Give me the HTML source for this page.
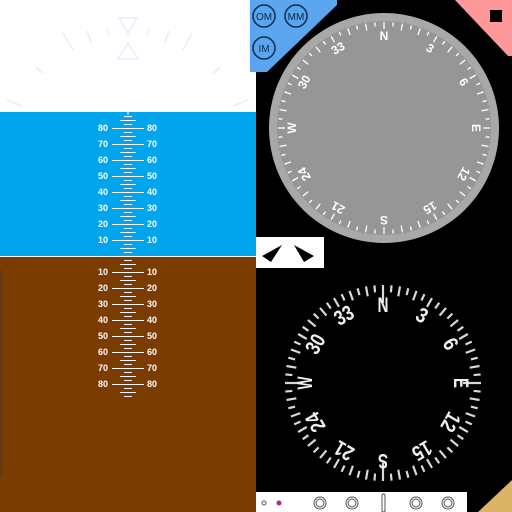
<!DOCTYPE html>
<html><head><meta charset="utf-8"><style>
html,body{margin:0;padding:0;width:512px;height:512px;overflow:hidden;background:#000}
svg{display:block}
text{font-family:"Liberation Sans",sans-serif;font-weight:bold}
</style></head><body>
<svg id="s" width="512" height="512" viewBox="0 0 512 512">
<rect x="0" y="0" width="512" height="512" fill="#000"/>
<rect x="0" y="0" width="256" height="112" fill="#fff"/>
<g stroke="#e4eefa" stroke-width="1.5" fill="none">
<path d="M119 18 L137 18 L128 33 Z"/><path d="M118 59 L138 59 L128 43 Z"/>
<line x1="63" y1="33" x2="73" y2="50"/><line x1="87" y1="31" x2="91" y2="42"/>
<line x1="107" y1="27" x2="109" y2="37"/><line x1="149" y1="27" x2="147" y2="37"/>
<line x1="169" y1="31" x2="165" y2="42"/><line x1="192" y1="33" x2="183" y2="50"/>
<line x1="36" y1="67" x2="43" y2="73"/><line x1="220" y1="67" x2="213" y2="73"/>
<line x1="7" y1="100" x2="22" y2="106"/><line x1="248" y1="100" x2="233" y2="106"/>
</g>
<rect x="0" y="112" width="256" height="144" fill="#00a5ec"/>
<rect x="0" y="256" width="256" height="1" fill="#fff"/>
<rect x="0" y="257" width="256" height="255" fill="#7a3c00"/>
<rect x="0" y="270" width="2" height="205" fill="#5a3a20"/>
<g id="ladder" stroke="#fff" stroke-width="1"></g>
<g fill="#fff" font-size="9">
<g text-anchor="end">
<text x="108" y="131">80</text><text x="108" y="147">70</text><text x="108" y="163">60</text><text x="108" y="179">50</text><text x="108" y="195">40</text><text x="108" y="211">30</text><text x="108" y="227">20</text><text x="108" y="243">10</text>
<text x="108" y="275">10</text><text x="108" y="291">20</text><text x="108" y="307">30</text><text x="108" y="323">40</text><text x="108" y="339">50</text><text x="108" y="355">60</text><text x="108" y="371">70</text><text x="108" y="387">80</text>
</g>
<g text-anchor="start">
<text x="147" y="131">80</text><text x="147" y="147">70</text><text x="147" y="163">60</text><text x="147" y="179">50</text><text x="147" y="195">40</text><text x="147" y="211">30</text><text x="147" y="227">20</text><text x="147" y="243">10</text>
<text x="147" y="275">10</text><text x="147" y="291">20</text><text x="147" y="307">30</text><text x="147" y="323">40</text><text x="147" y="339">50</text><text x="147" y="355">60</text><text x="147" y="371">70</text><text x="147" y="387">80</text>
</g></g>

<path d="M250 0 L337 0 L337 5 L267 72 L250 72 Z" fill="#5aa5ee"/>
<g fill="none" stroke="#0d2a4a" stroke-width="1.5"><circle cx="264" cy="16" r="11"/><circle cx="296" cy="16" r="11"/><circle cx="264" cy="48" r="11"/></g>
<g font-size="10" fill="#0d2a4a" text-anchor="middle"><text x="264" y="20" style="font-weight:normal">OM</text><text x="296" y="20" style="font-weight:normal">MM</text><text x="264" y="52" style="font-weight:normal">IM</text></g>
<path d="M455 0 L512 0 L512 56 L508 56 Z" fill="#f99"/>
<rect x="490" y="10" width="12" height="12" fill="#000"/>

<circle cx="384" cy="128" r="115" fill="#a8a8a8"/>
<circle cx="384" cy="128" r="107" fill="#969696"/>
<g id="g1" stroke="#fff" stroke-width="1.3"></g>
<g fill="#fff" font-size="12" text-anchor="middle">
<text x="384" y="40" transform="rotate(0 384 128)">N</text>
<text x="384" y="40" transform="rotate(30 384 128)">3</text>
<text x="384" y="40" transform="rotate(60 384 128)">6</text>
<text x="384" y="40" transform="rotate(90 384 128)">E</text>
<text x="384" y="40" transform="rotate(120 384 128)">12</text>
<text x="384" y="40" transform="rotate(150 384 128)">15</text>
<text x="384" y="40" transform="rotate(180 384 128)">S</text>
<text x="384" y="40" transform="rotate(210 384 128)">21</text>
<text x="384" y="40" transform="rotate(240 384 128)">24</text>
<text x="384" y="40" transform="rotate(270 384 128)">W</text>
<text x="384" y="40" transform="rotate(300 384 128)">30</text>
<text x="384" y="40" transform="rotate(330 384 128)">33</text>
</g>

<rect x="256" y="237" width="68" height="31" fill="#fff"/>
<path d="M262 256 L282 245 L271 262 Z" fill="#000"/>
<path d="M294 245 L314 256 L304 262 Z" fill="#000"/>

<g id="g2" stroke="#d8d8d8" stroke-width="2.2"></g>
<g fill="#f0f0f0" font-size="21" text-anchor="middle">
<text x="383" y="312" transform="rotate(0 383 383)" textLength="11" lengthAdjust="spacingAndGlyphs">N</text>
<text x="383" y="312" transform="rotate(30 383 383)" textLength="10" lengthAdjust="spacingAndGlyphs">3</text>
<text x="383" y="312" transform="rotate(60 383 383)" textLength="10" lengthAdjust="spacingAndGlyphs">6</text>
<text x="383" y="312" transform="rotate(90 383 383)" textLength="10" lengthAdjust="spacingAndGlyphs">E</text>
<text x="383" y="312" transform="rotate(120 383 383)" textLength="19" lengthAdjust="spacingAndGlyphs">12</text>
<text x="383" y="312" transform="rotate(150 383 383)" textLength="19" lengthAdjust="spacingAndGlyphs">15</text>
<text x="383" y="312" transform="rotate(180 383 383)" textLength="10" lengthAdjust="spacingAndGlyphs">S</text>
<text x="383" y="312" transform="rotate(210 383 383)" textLength="19" lengthAdjust="spacingAndGlyphs">21</text>
<text x="383" y="312" transform="rotate(240 383 383)" textLength="19" lengthAdjust="spacingAndGlyphs">24</text>
<text x="383" y="312" transform="rotate(270 383 383)" textLength="13" lengthAdjust="spacingAndGlyphs">W</text>
<text x="383" y="312" transform="rotate(300 383 383)" textLength="19" lengthAdjust="spacingAndGlyphs">30</text>
<text x="383" y="312" transform="rotate(330 383 383)" textLength="19" lengthAdjust="spacingAndGlyphs">33</text>
</g>

<rect x="256" y="492" width="211" height="20" fill="#fff"/>
<g fill="none" stroke="#555" stroke-width="1">
<circle cx="264" cy="503" r="2"/>
<circle cx="320" cy="503" r="6"/><circle cx="320" cy="503" r="4"/>
<circle cx="352" cy="503" r="6"/><circle cx="352" cy="503" r="4"/>
<circle cx="416" cy="503" r="6"/><circle cx="416" cy="503" r="4"/>
<circle cx="448" cy="503" r="6"/><circle cx="448" cy="503" r="4"/>
<rect x="382" y="494" width="3" height="18" rx="1.5"/>
</g>
<circle cx="279" cy="503" r="2.5" fill="#a03090"/>
<path d="M512 480 L512 512 L478 512 Z" fill="#dcb468"/>
</svg>
<script>
var NS="http://www.w3.org/2000/svg";
function ln(g,x1,y1,x2,y2){var l=document.createElementNS(NS,"line");l.setAttribute("x1",x1);l.setAttribute("y1",y1);l.setAttribute("x2",x2);l.setAttribute("y2",y2);g.appendChild(l);}
var L=document.getElementById("ladder");
ln(L,128,112,128,115);
[[116,4],[120,8],[124,4]].forEach(function(a){ln(L,128-a[1],a[0]+0.5,128+a[1],a[0]+0.5);});
function seg(y0){[[4,4],[8,8],[12,4]].forEach(function(a){ln(L,128-a[1],y0+a[0]+0.5,128+a[1],y0+a[0]+0.5);});}
for(var i=0;i<8;i++){var y=128+16*i;ln(L,112,y+0.5,144,y+0.5);seg(y);}
[260,264,268].forEach(function(y,k){var h=k==1?8:4;ln(L,128-h,y+.5,128+h,y+.5);});
for(var i=0;i<8;i++){var y=272+16*i;ln(L,112,y+0.5,144,y+0.5);seg(y);}
var g1=document.getElementById("g1");
for(var a=0;a<360;a+=5){var r=a*Math.PI/180,s=Math.sin(r),c=Math.cos(r),r1=106,r2=(a%10==0)?99:102;
 ln(g1,384+s*r1,128-c*r1,384+s*r2,128-c*r2);}
var g2=document.getElementById("g2");
for(var a=0;a<360;a+=5){var r=a*Math.PI/180,s=Math.sin(r),c=Math.cos(r),r1=98,r2=(a%10==0)?88:91;
 if(a%90==0) r2=80;
 ln(g2,383+s*r1,383-c*r1,383+s*r2,383-c*r2);}
</script>
</body></html>
